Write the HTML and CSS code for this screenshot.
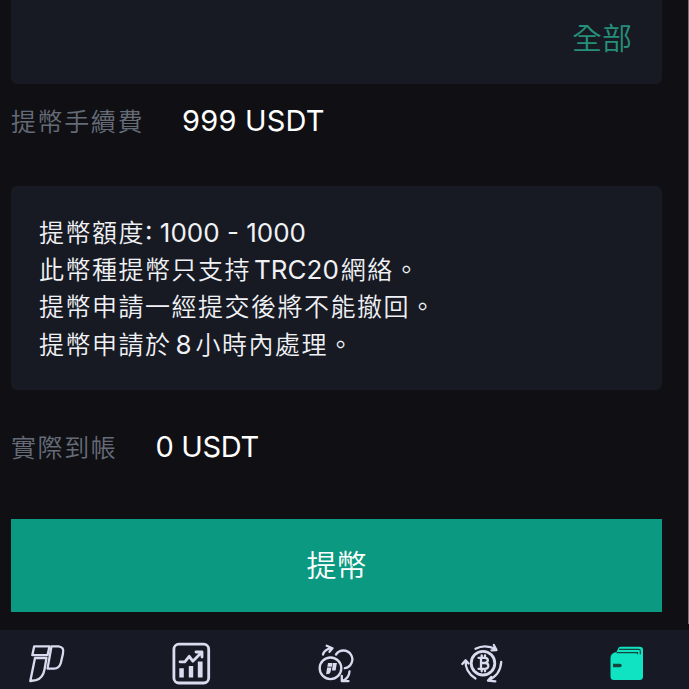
FILE: index.html
```html
<!DOCTYPE html>
<html lang="zh-Hant">
<head>
<meta charset="utf-8">
<title>提幣</title>
<link rel="stylesheet" href="styles.css">
</head>
<body>
<main class="page">
  <section class="amount"><span class="all">全部</span></section>
  <div class="row fee"><span class="label">提幣手續費</span><span class="value wide">999 USDT</span></div>
  <section class="notice">
    <p>提幣額度<span class="latin range">: 1000 - 1000</span></p>
    <p>此幣種提幣只支持<span class="latin chain">TRC20</span>網絡。</p>
    <p>提幣申請一經提交後將不能撤回。</p>
    <p>提幣申請於<span class="latin hours">8</span>小時內處理。</p>
  </section>
  <div class="row actual"><span class="label">實際到帳</span><span class="value">0 USDT</span></div>
  <button class="submit">提幣</button>
</main>
<div class="scrollbar"></div>
<nav class="tabs">
  <svg class="icon" viewBox="24 640 44 46">
    <g class="line">
      <path d="M34.2 646.3H49.5L47.5 655.2H32.3Z"/>
      <path d="M35 658H46.5L44.5 669.5Q43 678 36 680.2L30.3 681Z"/>
      <path d="M51.5 646.3H58.5Q64.5 647 63 653.5L60.8 663Q59.2 668.4 54 668.6H47.5Z"/>
    </g>
  </svg>
  <svg class="icon" viewBox="170 640 44 46">
    <rect class="line thick" x="174.9" y="644.2" width="34.8" height="38.8" rx="5"/>
    <path class="line thick" d="M181 661.8H185.8L190.2 656.3L193.8 661.2L202.5 652.6M197 652H203V657"/>
    <path class="fill" d="M180.3 668.2h4.5v9.3h-4.5zM189.8 666h4.4v11.5h-4.4zM198.8 661.5h4.8v16h-4.8z"/>
  </svg>
  <svg class="icon" viewBox="315 640 44 46">
    <circle class="line" cx="330.5" cy="668.3" r="10.8"/>
    <path class="line" d="M336 654.5A8.9 8.9 0 1 1 344.8 668.2"/>
    <path class="line" d="M323 654.5Q324.5 649.5 331.2 648.2M326.7 645.8L332.5 648.2L329.5 651.8M349.5 671.5Q349 678 343 680.7M341.8 675.8V681.2H348.5"/>
    <path class="fill" d="M328 663h4.6l-.7 3.7h-4.6zM327.1 667.5h4.4l-1 4.5q-.5 2.2-4.4 2.2zM333.1 663h3.8l-1.3 7.5h-3.7z"/>
  </svg>
  <svg class="icon" viewBox="460 640 44 46">
    <circle class="line thick" cx="483" cy="663.2" r="11.8"/>
    <path class="line" d="M475.5 648.8Q485 643.8 496 649.2M493.8 645L496.5 650L491.5 650.3M475.5 678.5Q465 672 465.6 660.6M462.3 664L465.6 660.3L468.6 663.5M501.2 662Q500.5 675 488 680.5M491.2 677L488 680.6L495.3 681.3"/>
    <path class="line" d="M478.5 657.8H485Q488 658 487.8 660.5Q487.5 663 484.8 663H481H485.3Q488.5 663.3 488.3 666.2Q488 668.8 485 668.8H478.5M481 658V668.5M481.7 655.3V658M485 655.3V658M481.7 669V671.3M485 669V671.3"/>
  </svg>
  <svg class="icon" viewBox="605 640 44 46">
    <path class="wallet" d="M616.5 652L618.5 647.8Q619 646.8 621 646.8H639.5Q643 646.8 643 650V676.5Q643 680 639.5 680H614Q610.5 680 610.5 676.5V658Q610.5 653 616.5 652Z"/>
    <path class="slot" d="M619 649.4H638.8Q640.3 649.4 640.3 651V654.2M616.5 652.7H637.5V654.2"/>
    <path class="clasp" d="M613 663.8h7q1.7 0 1.7 1.7t-1.7 1.7h-7z"/>
  </svg>
</nav>
</body>
</html>
```
FILE: styles.css
```css
* { box-sizing: border-box; }

body {
  position: relative;
  display: flex;
  flex-direction: column;
  height: 689px;
  margin: 0;
  overflow: hidden;
  background: #101014;
  color: #f0f1f5;
  font-family: Inter, "Noto Sans CJK TC", sans-serif;
  font-weight: 350;
}

.page {
  display: flex;
  flex-direction: column;
  height: 630px;
  padding: 0 27px 0 11px;
}

.amount {
  display: flex;
  justify-content: flex-end;
  height: 84px;
  padding: 17px 30px 0 0;
  border-radius: 0 0 6px 6px;
  background: #171a22;
}

.all {
  color: #268f7a;
  font-size: 30px;
  line-height: 42px;
}

.row {
  display: flex;
  align-items: center;
  height: 38px;
}

.fee { margin-top: 17px; }

.label {
  color: #656b77;
  font-size: 25px;
  letter-spacing: 1.6px;
}

.value {
  margin-left: 38px;
  color: #fff;
  font-size: 29px;
  font-weight: 380;
  letter-spacing: -0.3px;
}

.wide { letter-spacing: 0.2px; }

.notice {
  height: 204px;
  margin-top: 47px;
  padding: 28px;
  border-radius: 6px;
  background: #171a22;
}

.notice p {
  height: 37.3px;
  margin: 0;
  font-size: 25px;
  letter-spacing: 1.5px;
  line-height: 37.3px;
  white-space: nowrap;
}

.latin {
  font-size: 26px;
  font-weight: 390;
  letter-spacing: 0;
}

.chain { margin: 0 2px 0 3px; }
.hours { margin: 0 4px; }

.actual { margin-top: 37px; }

.submit {
  height: 93px;
  margin-top: 54px;
  padding: 0 0 5px;
  border: 0;
  background: #0b9981;
  color: #fff;
  font: inherit;
  font-size: 30px;
}

.scrollbar {
  position: absolute;
  top: 0;
  right: 0;
  width: 1px;
  height: 624px;
  background: #74757a;
}

.tabs {
  display: flex;
  justify-content: space-between;
  height: 59px;
  padding: 10px 40px 0 24px;
  background: #171a24;
}

.icon { width: 44px; height: 46px; }

.line {
  fill: none;
  stroke: #d9dcef;
  stroke-width: 2.3;
  stroke-linecap: round;
  stroke-linejoin: round;
}

.thick { stroke-width: 2.8; }
.fill { fill: #d9dcef; }
.wallet { fill: #10e3c2; }
.slot { fill: none; stroke: #15443f; stroke-width: 1.2; }
.clasp { fill: #15443f; }
```
